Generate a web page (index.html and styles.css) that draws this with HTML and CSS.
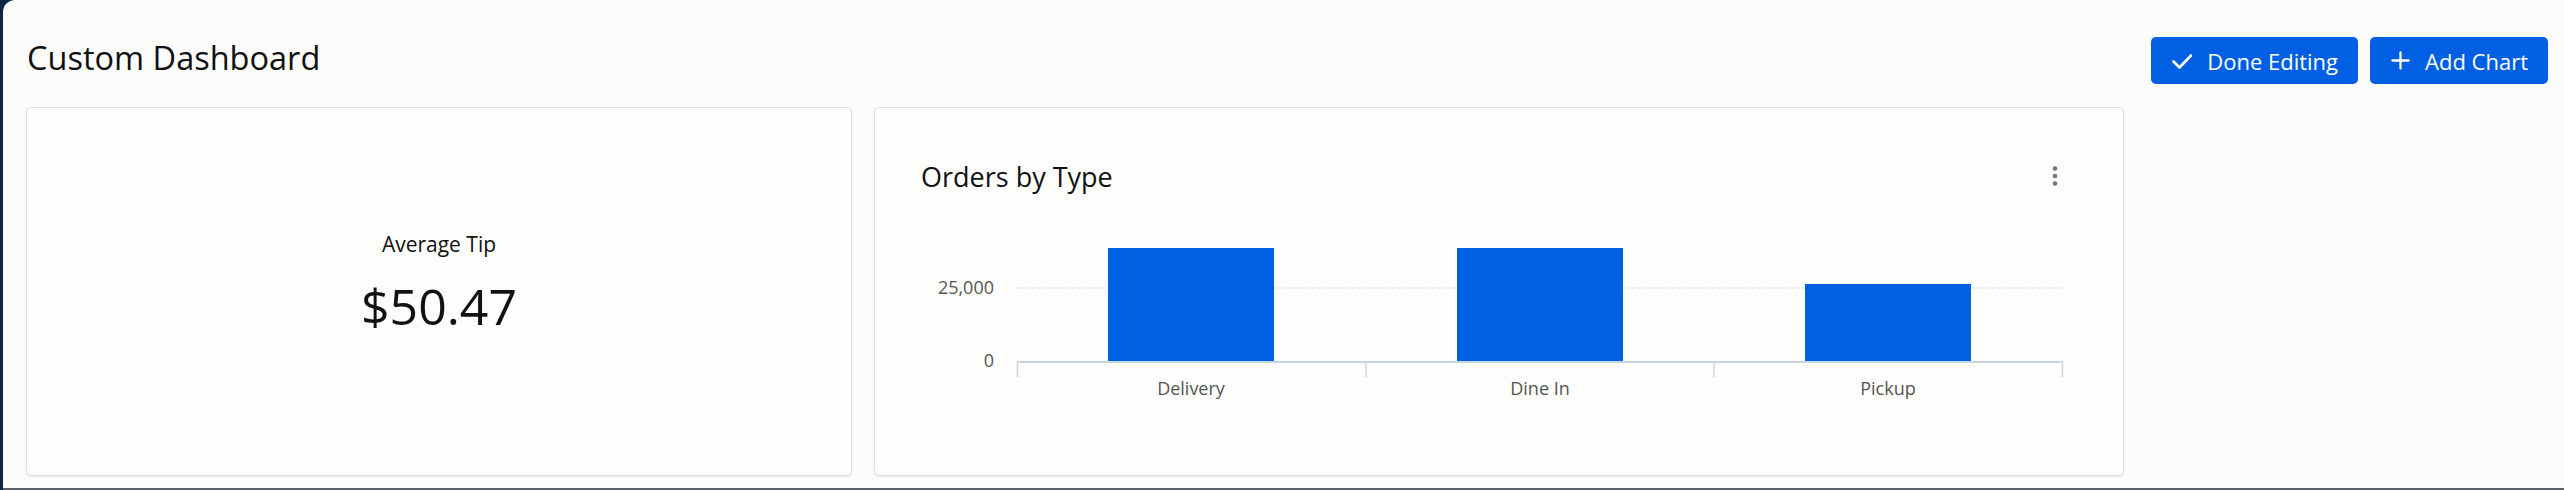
FILE: index.html
```html
<!DOCTYPE html>
<html lang="en">
<head>
    <meta charset="UTF-8">
    <meta name="viewport" content="width=device-width, initial-scale=1.0">
    <title>Custom Dashboard</title>
    <link rel="stylesheet" href="styles.css">
</head>
<body>
    <div class="page">
        <div class="header">
            <h1>Custom Dashboard</h1>
            <div class="actions">
                <button class="btn">
                    <svg class="btn-icon" viewBox="0 0 20 20" width="20" height="20">
                        <polyline points="1.5,10.5 7.5,16.5 19,4.5" fill="none" stroke="#fff" stroke-width="2.6" stroke-linecap="round" stroke-linejoin="round"/>
                    </svg>
                    Done Editing
                </button>
                <button class="btn">
                    <svg class="btn-icon" viewBox="0 0 20 20" width="19" height="19">
                        <path d="M10 1.5V18.5M1.5 10H18.5" fill="none" stroke="#fff" stroke-width="2.4" stroke-linecap="round"/>
                    </svg>
                    Add Chart
                </button>
            </div>
        </div>

        <div class="grid">
            <div class="card card-stat">
                <div class="stat">
                    <div class="stat-label">Average Tip</div>
                    <div class="stat-value">$50.47</div>
                </div>
            </div>

            <div class="card card-chart">
                <div class="chart-head">
                    <h2>Orders by Type</h2>
                    <svg class="kebab" viewBox="0 0 8 24" width="8" height="24">
                        <circle cx="4" cy="4.5" r="2.3" fill="#767676"/>
                        <circle cx="4" cy="12" r="2.3" fill="#767676"/>
                        <circle cx="4" cy="19.5" r="2.3" fill="#767676"/>
                    </svg>
                </div>

                <svg class="chart" width="1142" height="180" viewBox="0 0 1142 180">
                    <!-- grid -->
                    <line x1="96" y1="58" x2="1142" y2="58" class="gridline"/>
                    <text x="73" y="64" class="axis-label" text-anchor="end">25,000</text>
                    <text x="73" y="137" class="axis-label" text-anchor="end">0</text>

                    <!-- bars -->
                    <rect x="187" y="18" width="166" height="114" class="bar"/>
                    <rect x="536" y="18" width="166" height="114" class="bar"/>
                    <rect x="884" y="54" width="166" height="78" class="bar"/>

                    <!-- x axis -->
                    <line x1="96" y1="132" x2="1142" y2="132" class="axis"/>
                    <line x1="96.5" y1="132" x2="96.5" y2="147" class="tick"/>
                    <line x1="445" y1="132" x2="445" y2="147" class="tick"/>
                    <line x1="793" y1="132" x2="793" y2="147" class="tick"/>
                    <line x1="1141.5" y1="132" x2="1141.5" y2="147" class="tick"/>

                    <text x="270" y="165" class="axis-label" text-anchor="middle">Delivery</text>
                    <text x="619" y="165" class="axis-label" text-anchor="middle">Dine In</text>
                    <text x="967" y="165" class="axis-label" text-anchor="middle">Pickup</text>
                </svg>
            </div>
        </div>
    </div>
</body>
</html>
```

FILE: styles.css
```css
* {
    box-sizing: border-box;
    margin: 0;
    padding: 0;
    font-family: 'Open Sans', 'Noto Sans', sans-serif;
}

body {
    background-color: #0b2547;
    overflow: hidden;
}

.page {
    margin-left: 3px;
    height: 490px;
    padding: 37px 16px 0 23px;
    background-color: #fcfcfa;
    border-top-left-radius: 12px;
    border-bottom: 2px solid #5d6167;
}

.header {
    display: flex;
    justify-content: space-between;
    align-items: center;
    height: 47px;
    margin-bottom: 23px;
}

.header h1 {
    font-size: 32.5px;
    font-weight: 400;
    color: #111;
    line-height: 44px;
    margin-bottom: 6px;
    margin-left: 1px;
}

.actions {
    display: flex;
    gap: 12px;
}

.btn {
    display: flex;
    align-items: center;
    gap: 15px;
    height: 47px;
    padding: 0 20px 0 21px;
    border: none;
    border-radius: 5px;
    background-color: #005fe3;
    color: #fff;
    font-size: 22px;
    font-weight: 500;
}

.btn-icon {
    display: block;
}

.grid {
    display: grid;
    grid-template-columns: repeat(12, 1fr);
    gap: 22px;
}

.card {
    height: 369px;
    background-color: #fdfdfc;
    border: 1px solid #dcdde2;
    border-radius: 5px;
    box-shadow: 0 1px 2px rgba(0,0,0,0.08);
}

.card-stat {
    grid-column: span 4;
    display: flex;
    align-items: center;
    justify-content: center;
    padding-bottom: 18px;
}

.stat {
    text-align: center;
    color: #111;
}

.stat-label {
    font-size: 21px;
    line-height: 30px;
    margin-bottom: 17px;
}

.stat-value {
    font-size: 50px;
    line-height: 60px;
}

.card-chart {
    grid-column: span 6;
    padding: 50px 0 0 46px;
}

.chart-head {
    display: flex;
    justify-content: space-between;
    align-items: center;
    width: 1142px;
    height: 36px;
    padding-right: 4px;
}

.chart-head h2 {
    font-size: 27px;
    font-weight: 500;
    color: #111;
}

.kebab {
    display: block;
}

.chart {
    display: block;
    margin-top: 36px;
    overflow: visible;
}

.gridline {
    stroke: #dcdcd6;
    stroke-width: 1;
    stroke-dasharray: 3 2;
}

.axis {
    stroke: #c4d6e4;
    stroke-width: 2;
}

.tick {
    stroke: #d2d4d8;
    stroke-width: 1.5;
}

.bar {
    fill: #005fe3;
}

.axis-label {
    font-family: 'Open Sans', 'Noto Sans', sans-serif;
    font-size: 18px;
    fill: #555;
}
```
